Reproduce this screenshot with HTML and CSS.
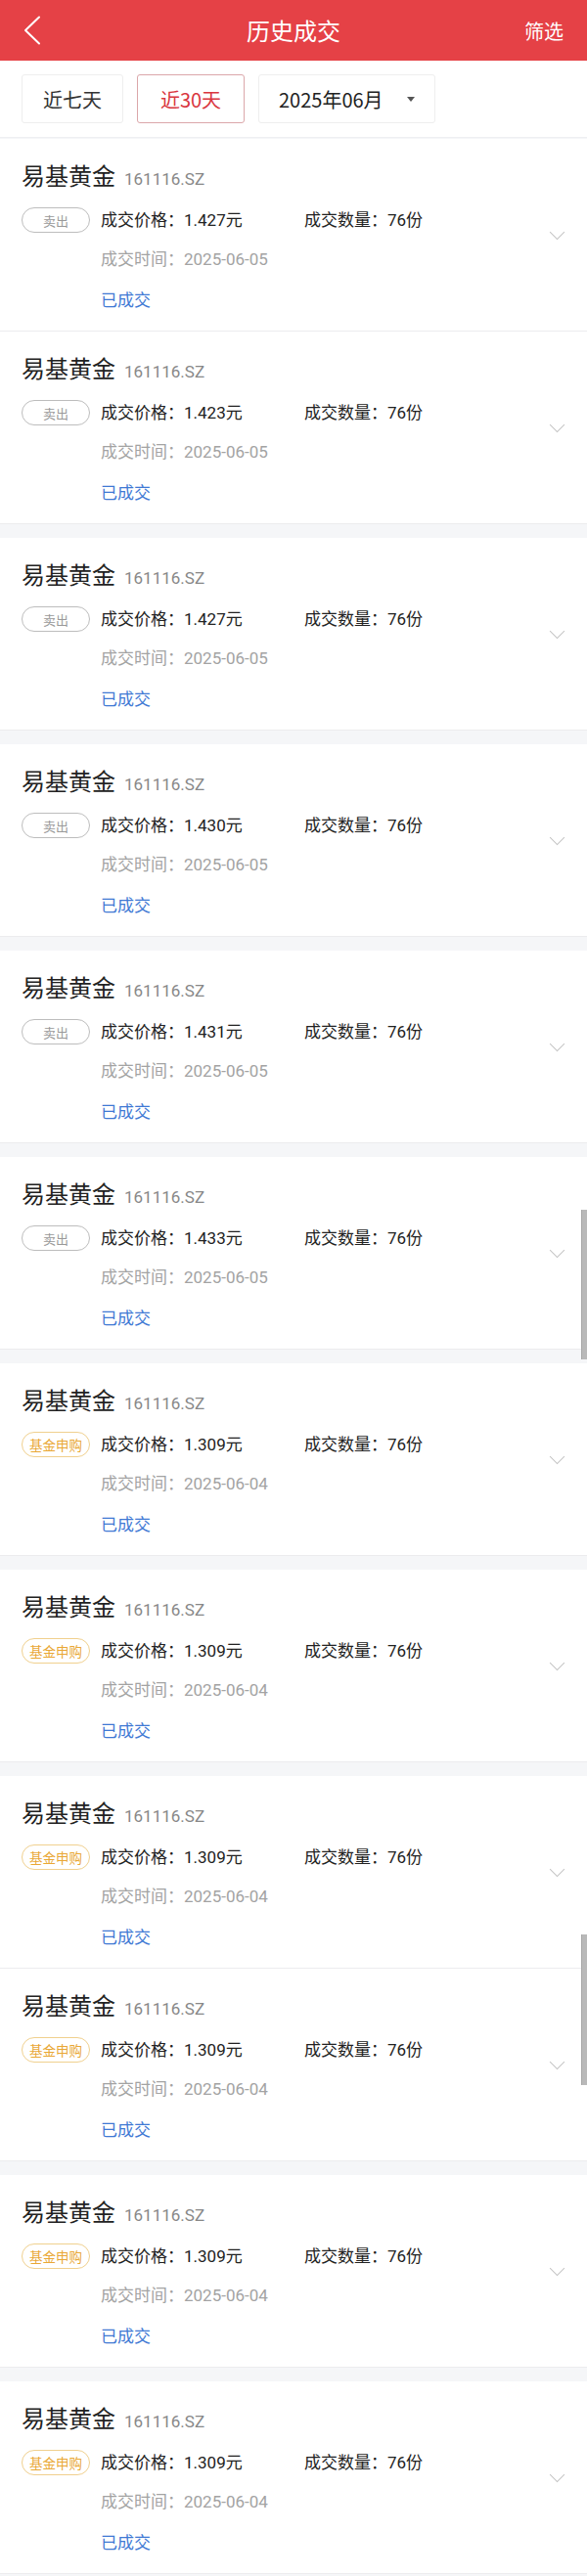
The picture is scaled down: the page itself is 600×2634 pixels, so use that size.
FILE: index.html
```html
<!DOCTYPE html>
<html lang="zh-CN">
<head>
<meta charset="utf-8">
<title>历史成交</title>
<link rel="stylesheet" href="styles.css">
</head>
<body>
<div class="page">
  <header class="topbar">
    <div class="back">
      <svg width="18" height="30" viewBox="0 0 18 30"><polyline points="16,1.5 2,15 16,28.5" fill="none" stroke="#fff" stroke-width="2" stroke-linecap="round" stroke-linejoin="round"/></svg>
    </div>
    <div class="title">历史成交</div>
    <div class="filter-link">筛选</div>
  </header>

  <div class="filters">
    <div class="fbtn">近七天</div>
    <div class="fbtn active">近30天</div>
    <div class="fbtn month">2025年06月<span class="caret"></span></div>
  </div>

  <div class="list">
    <div class="card line">
      <div class="name"><span class="fund">易基黄金</span><span class="code">161116.SZ</span></div>
      <div class="row"><span class="tag sell">卖出</span>
        <div class="info">
          <div class="l1"><span class="price">成交价格：1.427元</span><span>成交数量：76份</span></div>
          <div class="l2">成交时间：2025-06-05</div>
          <div class="l3">已成交</div>
        </div>
      </div>
      <span class="chev"></span>
    </div>
    <div class="card gap">
      <div class="name"><span class="fund">易基黄金</span><span class="code">161116.SZ</span></div>
      <div class="row"><span class="tag sell">卖出</span>
        <div class="info">
          <div class="l1"><span class="price">成交价格：1.423元</span><span>成交数量：76份</span></div>
          <div class="l2">成交时间：2025-06-05</div>
          <div class="l3">已成交</div>
        </div>
      </div>
      <span class="chev"></span>
    </div>
    <div class="card gap">
      <div class="name"><span class="fund">易基黄金</span><span class="code">161116.SZ</span></div>
      <div class="row"><span class="tag sell">卖出</span>
        <div class="info">
          <div class="l1"><span class="price">成交价格：1.427元</span><span>成交数量：76份</span></div>
          <div class="l2">成交时间：2025-06-05</div>
          <div class="l3">已成交</div>
        </div>
      </div>
      <span class="chev"></span>
    </div>
    <div class="card gap">
      <div class="name"><span class="fund">易基黄金</span><span class="code">161116.SZ</span></div>
      <div class="row"><span class="tag sell">卖出</span>
        <div class="info">
          <div class="l1"><span class="price">成交价格：1.430元</span><span>成交数量：76份</span></div>
          <div class="l2">成交时间：2025-06-05</div>
          <div class="l3">已成交</div>
        </div>
      </div>
      <span class="chev"></span>
    </div>
    <div class="card gap">
      <div class="name"><span class="fund">易基黄金</span><span class="code">161116.SZ</span></div>
      <div class="row"><span class="tag sell">卖出</span>
        <div class="info">
          <div class="l1"><span class="price">成交价格：1.431元</span><span>成交数量：76份</span></div>
          <div class="l2">成交时间：2025-06-05</div>
          <div class="l3">已成交</div>
        </div>
      </div>
      <span class="chev"></span>
    </div>
    <div class="card gap">
      <div class="name"><span class="fund">易基黄金</span><span class="code">161116.SZ</span></div>
      <div class="row"><span class="tag sell">卖出</span>
        <div class="info">
          <div class="l1"><span class="price">成交价格：1.433元</span><span>成交数量：76份</span></div>
          <div class="l2">成交时间：2025-06-05</div>
          <div class="l3">已成交</div>
        </div>
      </div>
      <span class="chev"></span>
    </div>
    <div class="card gap">
      <div class="name"><span class="fund">易基黄金</span><span class="code">161116.SZ</span></div>
      <div class="row"><span class="tag buy">基金申购</span>
        <div class="info">
          <div class="l1"><span class="price">成交价格：1.309元</span><span>成交数量：76份</span></div>
          <div class="l2">成交时间：2025-06-04</div>
          <div class="l3">已成交</div>
        </div>
      </div>
      <span class="chev"></span>
    </div>
    <div class="card gap">
      <div class="name"><span class="fund">易基黄金</span><span class="code">161116.SZ</span></div>
      <div class="row"><span class="tag buy">基金申购</span>
        <div class="info">
          <div class="l1"><span class="price">成交价格：1.309元</span><span>成交数量：76份</span></div>
          <div class="l2">成交时间：2025-06-04</div>
          <div class="l3">已成交</div>
        </div>
      </div>
      <span class="chev"></span>
    </div>
    <div class="card line">
      <div class="name"><span class="fund">易基黄金</span><span class="code">161116.SZ</span></div>
      <div class="row"><span class="tag buy">基金申购</span>
        <div class="info">
          <div class="l1"><span class="price">成交价格：1.309元</span><span>成交数量：76份</span></div>
          <div class="l2">成交时间：2025-06-04</div>
          <div class="l3">已成交</div>
        </div>
      </div>
      <span class="chev"></span>
    </div>
    <div class="card gap">
      <div class="name"><span class="fund">易基黄金</span><span class="code">161116.SZ</span></div>
      <div class="row"><span class="tag buy">基金申购</span>
        <div class="info">
          <div class="l1"><span class="price">成交价格：1.309元</span><span>成交数量：76份</span></div>
          <div class="l2">成交时间：2025-06-04</div>
          <div class="l3">已成交</div>
        </div>
      </div>
      <span class="chev"></span>
    </div>
    <div class="card gap">
      <div class="name"><span class="fund">易基黄金</span><span class="code">161116.SZ</span></div>
      <div class="row"><span class="tag buy">基金申购</span>
        <div class="info">
          <div class="l1"><span class="price">成交价格：1.309元</span><span>成交数量：76份</span></div>
          <div class="l2">成交时间：2025-06-04</div>
          <div class="l3">已成交</div>
        </div>
      </div>
      <span class="chev"></span>
    </div>
    <div class="card">
      <div class="name"><span class="fund">易基黄金</span><span class="code">161116.SZ</span></div>
      <div class="row"><span class="tag buy">基金申购</span>
        <div class="info">
          <div class="l1"><span class="price">成交价格：1.309元</span><span>成交数量：76份</span></div>
          <div class="l2">成交时间：2025-06-04</div>
          <div class="l3">已成交</div>
        </div>
      </div>
      <span class="chev"></span>
    </div>
  </div>

  <div class="scrollbar s1"></div>
  <div class="scrollbar s2"></div>
</div>
</body>
</html>
```

FILE: styles.css
```css
* { box-sizing: border-box; }
html, body { margin: 0; padding: 0; }
body {
  background: #f5f6f8;
  font-family: Roboto, "Noto Sans CJK SC", sans-serif;
  font-weight: 400;
  color: #222;
}
.page {
  position: relative;
  width: 600px;
  min-height: 2634px;
  overflow: hidden;
}
.topbar {
  height: 62px;
  background: #e54146;
  display: grid;
  grid-template-columns: 1fr auto 1fr;
  align-items: center;
  padding: 0 24px 0 24px;
  color: #fff;
}
.back { display: flex; align-items: center; height: 30px; }
.back svg { display: block; }
.title {
  font-size: 24px;
  font-family: "Noto Sans CJK SC", sans-serif;
  line-height: 30px;
}
.filter-link {
  justify-self: end;
  font-size: 20px;
  font-family: "Noto Sans CJK SC", sans-serif;
}
.filters {
  background: #fff;
  display: flex;
  gap: 14px;
  padding: 14px 22px 14px 22px;
  border-bottom: 1px solid #eeeff2;
  margin-bottom: 1px;
}
.fbtn {
  height: 50px;
  border: 1px solid #eeeeee;
  border-radius: 3px;
  display: flex;
  align-items: center;
  justify-content: center;
  font-size: 20px;
  color: #333;
  font-family: "Noto Sans CJK SC", sans-serif;
  width: 104px;
}
.fbtn.active {
  width: 110px;
  color: #d9363e;
  border-color: #dba7aa;
}
.fbtn.month {
  width: 181px;
  color: #222;
  justify-content: flex-start;
  padding-left: 20px;
}
.caret {
  margin-left: 24px;
  width: 0;
  height: 0;
  border-left: 4px solid transparent;
  border-right: 4px solid transparent;
  border-top: 5px solid #555;
}
.list { display: flex; flex-direction: column; }
.card {
  position: relative;
  background: #fff;
  height: 197px;
  padding: 21px 0 0 22px;
  border-bottom: 1px solid #ececee;
}
.card.gap { margin-bottom: 14px; }
.name {
  display: flex;
  align-items: baseline;
  gap: 9px;
  height: 32px;
  line-height: 32px;
}
.fund {
  font-size: 24px;
  color: #222;
  font-family: "Noto Sans CJK SC", sans-serif;
}
.code {
  font-size: 17px;
  color: #888;
}
.row {
  display: flex;
  align-items: flex-start;
  margin-top: 16px;
}
.tag {
  flex: none;
  width: 70px;
  height: 26px;
  margin-top: 1px;
  border-radius: 13px;
  border: 1px solid #bdbdbd;
  display: flex;
  align-items: center;
  justify-content: center;
  font-size: 13px;
  color: #999;
  font-family: "Noto Sans CJK SC", sans-serif;
  margin-right: 11px;
}
.tag.buy {
  border-color: #f0d08e;
  color: #e9a735;
  font-size: 13.5px;
}
.info {
  display: flex;
  flex-direction: column;
  font-size: 17px;
  line-height: 28px;
}
.l1 { display: flex; color: #222; }
.price { width: 208px; }
.l2 { color: #a3a3a3; margin-top: 11.5px; }
.l3 { color: #3f79d4; margin-top: 14.5px; }
.chev {
  position: absolute;
  right: 25px;
  top: 90px;
  width: 11px;
  height: 11px;
  border-right: 1.5px solid #c4c4c4;
  border-bottom: 1.5px solid #c4c4c4;
  transform: rotate(45deg);
}
.scrollbar {
  position: absolute;
  right: 0;
  width: 6px;
  background: #b9b9b9;
  border-left: 1px solid #a8a8a8;
}
.s1 { top: 1237px; height: 153px; }
.s2 { top: 1978px; height: 154px; }
```
